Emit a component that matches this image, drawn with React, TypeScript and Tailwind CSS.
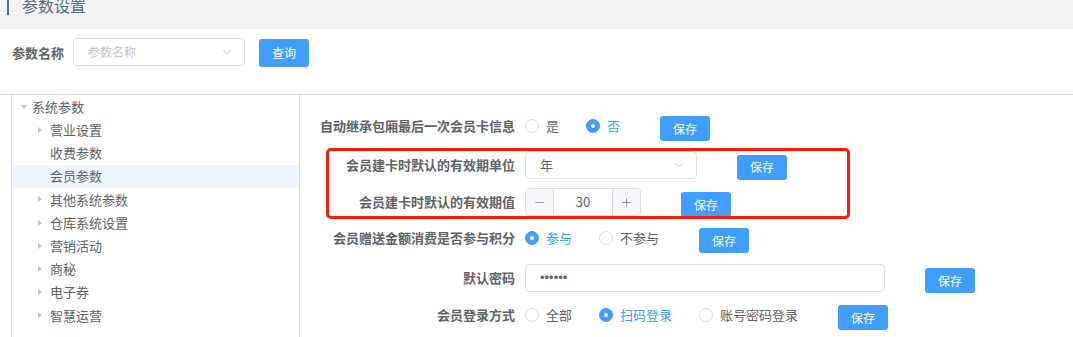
import React from "react";
import { ChevronDown, Minus, Plus } from "lucide-react";

const font = { fontFamily: '"Noto Sans CJK SC", "Noto Sans", sans-serif' };

const treeItems = [
  { name: "营业设置", caret: true },
  { name: "收费参数", caret: false },
  { name: "会员参数", caret: false, active: true },
  { name: "其他系统参数", caret: true },
  { name: "仓库系统设置", caret: true },
  { name: "营销活动", caret: true },
  { name: "商秘", caret: true },
  { name: "电子券", caret: true },
  { name: "智慧运营", caret: true },
];

function Caret({ down }: { down?: boolean }) {
  return (
    <svg width="6" height="6" viewBox="0 0 6 6" className="shrink-0">
      {down ? <polygon points="0,1 6,1 3,5" fill="#c0c4cc" /> : <polygon points="1,0 5,3 1,6" fill="#c0c4cc" />}
    </svg>
  );
}

function SaveButton() {
  return (
    <button className="ml-10 mt-[5px] h-[25px] w-[50px] shrink-0 rounded-[3px] bg-[#409eff] text-[12px] text-white">
      保存
    </button>
  );
}

function Radio({ label, checked }: { label: string; checked?: boolean }) {
  return (
    <label className="mr-[27px] flex items-center last:mr-0">
      <span
        className={`flex h-[14px] w-[14px] items-center justify-center rounded-full border ${
          checked ? "border-[#409eff] bg-[#409eff]" : "border-[#dcdfe6] bg-white"
        }`}
      >
        {checked && <span className="h-[4px] w-[4px] rounded-full bg-white" />}
      </span>
      <span className={`ml-[7px] text-[13px] ${checked ? "text-[#409eff]" : "text-[#606266]"}`}>{label}</span>
    </label>
  );
}

function Row({ label, h, children }: { label: string; h: string; children: React.ReactNode }) {
  return (
    <div className={`flex items-center ${h}`}>
      <div className="w-[225px] shrink-0 pr-[10px] text-right text-[13px] font-bold text-[#606266]">{label}</div>
      {children}
    </div>
  );
}

export default function App() {
  return (
    <div className="relative h-[337px] w-[1073px] overflow-hidden bg-white" style={font}>
      {/* page title */}
      <div className="h-[29px] overflow-hidden bg-[#f2f2f2]">
        <div className="-mt-[5px] flex items-center pl-[7px]">
          <span className="h-[20px] w-[3px] border-l-2 border-[#5a6b80]" />
          <span className="ml-[12px] text-[16px] leading-[20px] text-[#5a6b80]">参数设置</span>
        </div>
      </div>

      {/* search */}
      <div className="flex h-[65px] items-start pl-[12px] pt-[9px]">
        <span className="mt-[5px] text-[13px] font-bold text-[#606266]">参数名称</span>
        <div className="ml-[9px] flex h-[28px] w-[172px] items-center justify-between rounded-[4px] border border-[#dcdfe6] pl-[14px] pr-[10px]">
          <span className="text-[12px] text-[#c0c4cc]">参数名称</span>
          <ChevronDown size={14} strokeWidth={1.5} className="text-[#c0c4cc]" />
        </div>
        <button className="ml-[14px] mt-[1px] h-[28px] w-[50px] rounded-[3px] bg-[#409eff] text-[12px] text-white">查询</button>
      </div>

      {/* main */}
      <div className="flex h-[243px] border-t border-[#d5dbe5]">
        <div className="ml-[11px] w-[289px] shrink-0 border-l border-r border-[#d5dbe5]">
          <div className="flex h-[23.2px] items-center pl-[9px] text-[13px] text-[#606266]">
            <Caret down />
            <span className="ml-[5px]">系统参数</span>
          </div>
          {treeItems.map((it) => (
            <div
              key={it.name}
              className={`flex h-[23.2px] items-center pl-[25px] text-[13px] text-[#606266] ${it.active ? "bg-[#eff6ff]" : ""}`}
            >
              <span className="flex w-[6px] justify-center">{it.caret && <Caret />}</span>
              <span className="ml-[7px]">{it.name}</span>
            </div>
          ))}
        </div>

        <div className="flex-1 pt-[12px]">
          <Row label="自动继承包厢最后一次会员卡信息" h="h-[38px]">
            <div className="flex items-center">
              <Radio label="是" />
              <Radio label="否" checked />
            </div>
            <SaveButton />
          </Row>
          <Row label="会员建卡时默认的有效期单位" h="h-[39px]">
            <div className="flex h-[28px] w-[172px] items-center justify-between rounded-[4px] border border-[#dcdfe6] pl-[14px] pr-[10px]">
              <span className="text-[13px] text-[#606266]">年</span>
              <ChevronDown size={14} strokeWidth={1.5} className="text-[#c0c4cc]" />
            </div>
            <SaveButton />
          </Row>
          <Row label="会员建卡时默认的有效期值" h="h-[36px]">
            <div className="flex h-[28px] w-[116px] overflow-hidden rounded-[4px] border border-[#dcdfe6]">
              <span className="flex w-[28px] items-center justify-center border-r border-[#dcdfe6] bg-[#f5f7fa] text-[#606266]">
                <Minus size={13} strokeWidth={1.2} />
              </span>
              <span className="flex flex-1 items-center justify-center text-[13px] text-[#606266]">30</span>
              <span className="flex w-[28px] items-center justify-center border-l border-[#dcdfe6] bg-[#f5f7fa] text-[#606266]">
                <Plus size={13} strokeWidth={1.2} />
              </span>
            </div>
            <SaveButton />
          </Row>
          <Row label="会员赠送金额消费是否参与积分" h="h-[36px]">
            <div className="flex items-center">
              <Radio label="参与" checked />
              <Radio label="不参与" />
            </div>
            <SaveButton />
          </Row>
          <Row label="默认密码" h="h-[44px]">
            <div className="flex h-[28px] w-[360px] items-center rounded-[4px] border border-[#dcdfe6] pl-[14px]">
              <span className="text-[13px] text-[#606266]" style={{ fontFamily: '"Liberation Sans", sans-serif' }}>
                ••••••
              </span>
            </div>
            <SaveButton />
          </Row>
          <Row label="会员登录方式" h="h-[30px]">
            <div className="flex items-center">
              <Radio label="全部" />
              <Radio label="扫码登录" checked />
              <Radio label="账号密码登录" />
            </div>
            <SaveButton />
          </Row>
        </div>
      </div>

      {/* annotation */}
      <div className="absolute left-[326px] top-[148px] h-[71px] w-[524px] rounded-[5px] border-[3px] border-[#ff1a0a]" />
    </div>
  );
}
